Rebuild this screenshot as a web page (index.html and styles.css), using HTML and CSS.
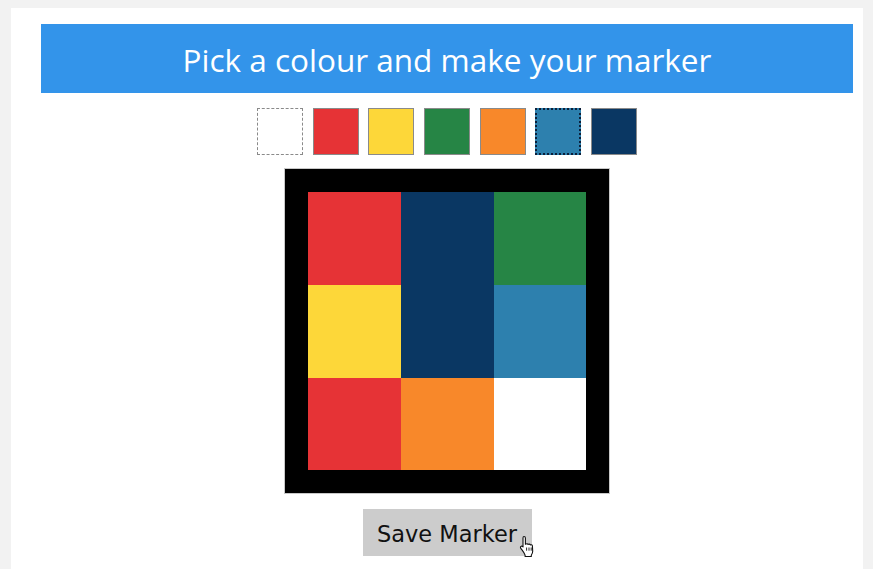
FILE: index.html
```html
<!DOCTYPE html>
<html lang="en">
<head>
<meta charset="utf-8">
<title>Marker maker</title>
<link rel="stylesheet" href="styles.css">
</head>
<body>
<main class="card">
  <h1 class="title">Pick a colour and make your marker</h1>
  <div class="palette">
    <button class="swatch swatch-white" aria-label="white"></button>
    <button class="swatch red" aria-label="red"></button>
    <button class="swatch yellow" aria-label="yellow"></button>
    <button class="swatch green" aria-label="green"></button>
    <button class="swatch orange" aria-label="orange"></button>
    <button class="swatch blue selected" aria-label="blue"></button>
    <button class="swatch navy" aria-label="navy"></button>
  </div>
  <div class="marker">
    <div class="grid">
      <div class="cell red"></div>
      <div class="cell navy"></div>
      <div class="cell green"></div>
      <div class="cell yellow"></div>
      <div class="cell navy"></div>
      <div class="cell blue"></div>
      <div class="cell red"></div>
      <div class="cell orange"></div>
      <div class="cell white"></div>
    </div>
  </div>
  <div class="actions">
    <button class="save">Save Marker</button>
    <svg class="pointer" width="16" height="22" viewBox="0 0 16 22" aria-hidden="true">
      <path d="M5 1.5c.8 0 1.4.6 1.4 1.4v6.3l.4-.1c.6-.6 1.9-.5 2.300.3.6-.5 1.8-.4 2.2.5.7-.4 1.9-.1 2.1.9l.3 5.5c0 1.6-.6 2.8-1.4 3.9v1.3H6.1v-1.4C5 17.2 3.2 15.2 1.8 13.3c-.6-.8-.4-1.8.4-2.1.7-.3 1.3 0 1.9.6l-.1-.1V2.9c0-.8.2-1.4 1-1.4z" fill="#fff" stroke="#111" stroke-width="1.1" stroke-linejoin="round"/>
      <path d="M7.6 12.5v3.2M10 12.5v3.2M12.2 12.5v3.2" stroke="#111" stroke-width="0.9" fill="none"/>
    </svg>
  </div>
</main>
</body>
</html>
```
FILE: styles.css
```css
html, body {
  margin: 0;
  padding: 0;
}

body {
  background: #f2f2f2;
  font-family: "DejaVu Sans", Verdana, sans-serif;
  height: 569px;
  overflow: hidden;
}

.card {
  background: #fff;
  margin: 8px 10px 0 11px;
  padding: 16px 10px 0 30px;
  height: 561px;
  box-sizing: border-box;
  display: flex;
  flex-direction: column;
  align-items: center;
}

.title {
  align-self: stretch;
  margin: 0;
  height: 69px;
  background: #3394ea;
  color: #fff;
  font-family: "Open Sans", "Noto Sans", sans-serif;
  font-weight: 400;
  font-size: 31.5px;
  display: flex;
  align-items: center;
  justify-content: center;
  padding-top: 2px;
  box-sizing: border-box;
}

.palette {
  display: flex;
  gap: 9.67px;
  margin-top: 15px;
}

.swatch {
  width: 46px;
  height: 47px;
  padding: 0;
  margin: 0;
  border: 1px solid #8a8a8a;
  box-sizing: border-box;
  cursor: pointer;
}

.swatch-white {
  background: #fff;
  border: 1px dashed #8a8a8a;
}

.swatch.selected {
  border: 2px dotted #0b1f3a;
}

.red { background: #e63336; }
.yellow { background: #fdd739; }
.green { background: #268545; }
.orange { background: #f8882a; }
.blue { background: #2d80ae; }
.navy { background: #0a3763; }
.white { background: #fff; }

.marker {
  margin-top: 14px;
  background: #000;
  padding: 23px;
  outline: 1px solid #c8c8c8;
}

.grid {
  display: grid;
  grid-template-columns: repeat(3, 93px);
  grid-template-rows: repeat(3, 93px);
  width: 278px;
  height: 278px;
  overflow: hidden;
}

.actions {
  position: relative;
  margin-top: 16px;
}

.save {
  background: #cccccc;
  border: none;
  margin: 0;
  width: 169px;
  height: 47px;
  font-family: "DejaVu Sans", Verdana, sans-serif;
  font-size: 22.5px;
  color: #111;
  padding: 3px 0 0 0;
  cursor: pointer;
}

.pointer {
  position: absolute;
  left: 156px;
  top: 26px;
}
```
